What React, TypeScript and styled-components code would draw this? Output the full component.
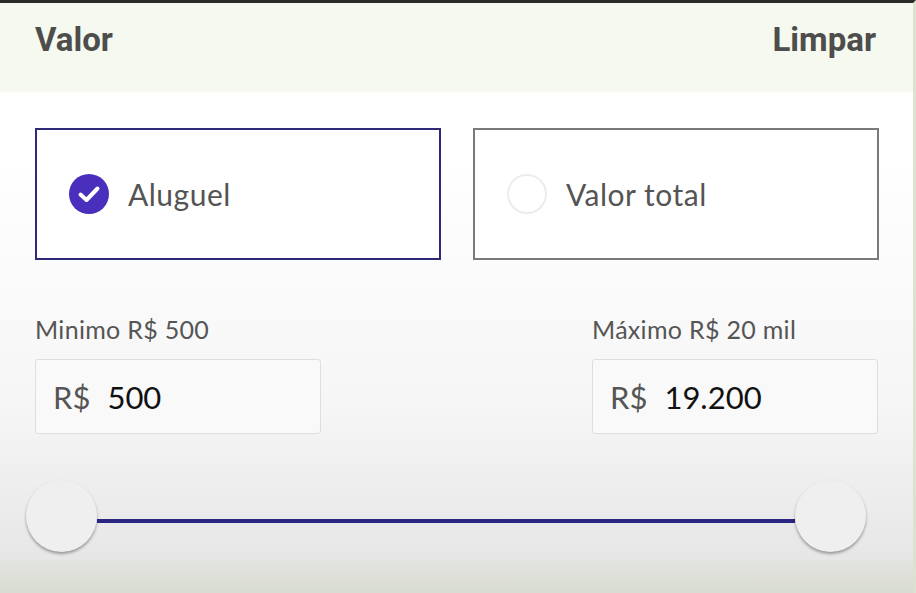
import React from 'react';
import styled, { createGlobalStyle } from 'styled-components';

const GlobalStyle = createGlobalStyle`
  html, body {
    margin: 0;
    padding: 0;
  }
  body {
    font-family: Lato, 'Open Sans', sans-serif;
  }
`;

interface OptionProps {
  selected: boolean;
}

const OPTIONS = [
  { label: 'Aluguel', selected: true },
  { label: 'Valor total', selected: false },
];

const RANGE = [
  { label: 'Minimo R$ 500', value: '500' },
  { label: 'Máximo R$ 20 mil', value: '19.200' },
];

const App = (): JSX.Element => {
  return (
    <Page>
      <GlobalStyle />
      <Header>
        <Title>Valor</Title>
        <ClearButton>Limpar</ClearButton>
      </Header>
      <Body>
        <OptionsRow>
          {OPTIONS.map((option) => (
            <OptionCard key={option.label} selected={option.selected}>
              {option.selected ? (
                <CheckIcon width="40" height="40" viewBox="0 0 40 40">
                  <circle cx="20" cy="20" r="20" fill="#4a2fbd" />
                  <path d="M11.5 20.5 L17.5 26 L28.5 14.5" fill="none" stroke="#fff" strokeWidth="4" strokeLinecap="round" strokeLinejoin="round" />
                </CheckIcon>
              ) : (
                <Radio />
              )}
              <OptionLabel>{option.label}</OptionLabel>
            </OptionCard>
          ))}
        </OptionsRow>
        <RangeRow>
          {RANGE.map((field) => (
            <Field key={field.label}>
              <FieldLabel>{field.label}</FieldLabel>
              <InputBox>
                <Currency>R$</Currency>
                <Amount>{field.value}</Amount>
              </InputBox>
            </Field>
          ))}
        </RangeRow>
        <Slider>
          <Thumb />
          <Track />
          <Thumb />
        </Slider>
      </Body>
      <Footer />
    </Page>
  );
};

const Page = styled.div`
  display: flex;
  flex-direction: column;
  width: 916px;
  height: 593px;
  box-sizing: border-box;
  border-top: 3px solid #2b2b2b;
  border-right: 3px solid #dde1d2;
  background: linear-gradient(to bottom, #ffffff 0px, #ffffff 150px, #f6f6f6 400px, #e6e6e6 560px);
  overflow: hidden;
`;

const Header = styled.div`
  display: flex;
  align-items: center;
  justify-content: space-between;
  flex: 0 0 89px;
  padding: 0 37px 16px 35px;
  box-sizing: border-box;
  background: #f6f9f0;
  font-family: Roboto, sans-serif;
  font-weight: 700;
  font-size: 33px;
  color: #4d4d4b;
`;

const Title = styled.h1`
  margin: 0;
  font-size: inherit;
  font-weight: 700;
`;

const ClearButton = styled.span`
  cursor: pointer;
`;

const Body = styled.div`
  flex: 1;
  display: flex;
  flex-direction: column;
  padding: 36px 35px 0 35px;
`;

const OptionsRow = styled.div`
  display: grid;
  grid-template-columns: 406px 406px;
  column-gap: 32px;
`;

const OptionCard = styled.div<OptionProps>`
  display: flex;
  align-items: center;
  gap: 19px;
  height: 132px;
  box-sizing: border-box;
  padding-left: 32px;
  border: 2px solid ${({ selected }) => (selected ? '#2e2a78' : '#7a7a7a')};
  background: #fff;
`;

const CheckIcon = styled.svg`
  flex-shrink: 0;
`;

const Radio = styled.span`
  width: 36px;
  height: 36px;
  flex-shrink: 0;
  border-radius: 50%;
  border: 2px solid #ececec;
`;

const OptionLabel = styled.span`
  font-size: 30px;
  letter-spacing: 0.5px;
  color: #545454;
`;

const RangeRow = styled.div`
  display: flex;
  justify-content: space-between;
  margin-top: 54px;
`;

const Field = styled.div`
  display: flex;
  flex-direction: column;
  gap: 15px;
  width: 286px;
`;

const FieldLabel = styled.span`
  font-size: 25px;
  line-height: 30px;
  letter-spacing: 0.3px;
  color: #555;
`;

const InputBox = styled.div`
  display: flex;
  align-items: center;
  gap: 17px;
  height: 75px;
  box-sizing: border-box;
  padding-left: 17px;
  border: 1px solid #dedede;
  border-radius: 3px;
  background: #f9f9f9;
  font-size: 31px;
`;

const Currency = styled.span`
  color: #555;
`;

const Amount = styled.span`
  color: #111;
`;

const Slider = styled.div`
  display: flex;
  align-items: center;
  margin: 46px 12px 0 -9px;
`;

const Thumb = styled.span`
  width: 71px;
  height: 72px;
  flex-shrink: 0;
  border-radius: 50%;
  background: #efefef;
  box-shadow: 0 2px 3px rgba(0, 0, 0, 0.35);
`;

const Track = styled.span`
  flex: 1;
  height: 4px;
  margin-top: 10px;
  background: #2a2582;
`;

const Footer = styled.div`
  flex: 0 0 33px;
  background: linear-gradient(to bottom, #e2e4de, #d9dcd3);
`;

export default App;
